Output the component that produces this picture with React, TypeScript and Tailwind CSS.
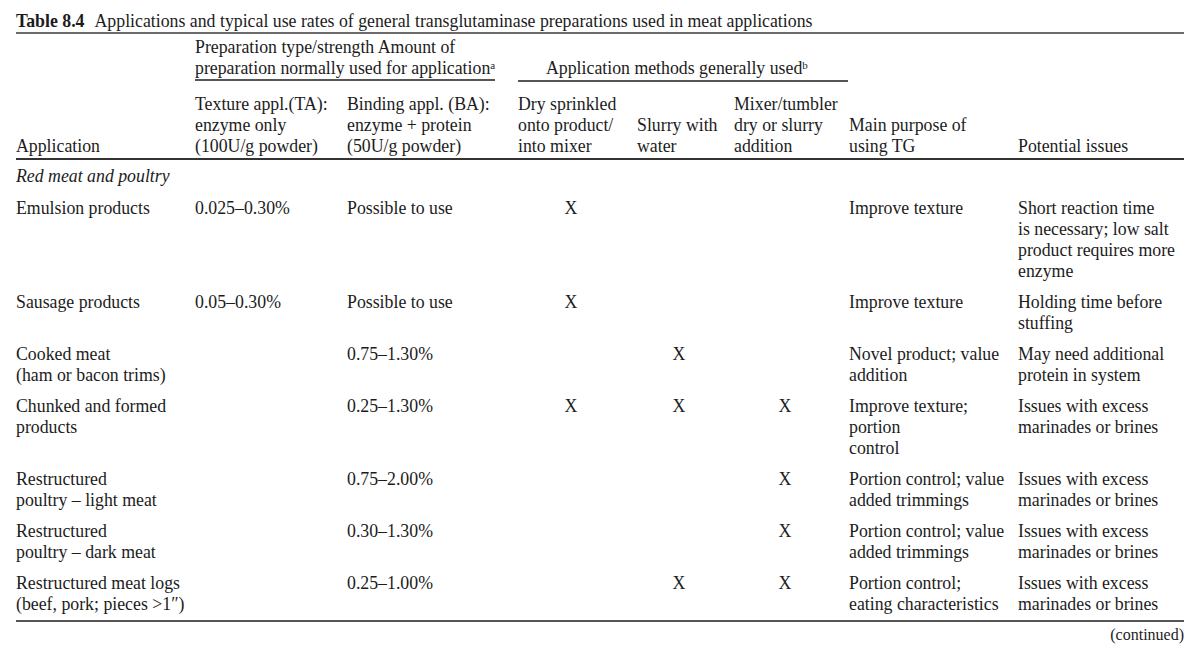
const grid = "grid grid-cols-[179px_152px_171px_119px_97px_115px_169px_166px]";

type Row = {
  app: string[];
  ta?: string;
  ba: string;
  dry?: boolean;
  slurry?: boolean;
  mixer?: boolean;
  purpose: string[];
  issues: string[];
};

const rows: Row[] = [
  {
    app: ["Emulsion products"],
    ta: "0.025–0.30%",
    ba: "Possible to use",
    dry: true,
    purpose: ["Improve texture"],
    issues: ["Short reaction time", "is necessary; low salt", "product requires more", "enzyme"],
  },
  {
    app: ["Sausage products"],
    ta: "0.05–0.30%",
    ba: "Possible to use",
    dry: true,
    purpose: ["Improve texture"],
    issues: ["Holding time before", "stuffing"],
  },
  {
    app: ["Cooked meat", "(ham or bacon trims)"],
    ba: "0.75–1.30%",
    slurry: true,
    purpose: ["Novel product; value", "addition"],
    issues: ["May need additional", "protein in system"],
  },
  {
    app: ["Chunked and formed", "products"],
    ba: "0.25–1.30%",
    dry: true,
    slurry: true,
    mixer: true,
    purpose: ["Improve texture;", "portion", "control"],
    issues: ["Issues with excess", "marinades or brines"],
  },
  {
    app: ["Restructured", "poultry – light meat"],
    ba: "0.75–2.00%",
    mixer: true,
    purpose: ["Portion control; value", "added trimmings"],
    issues: ["Issues with excess", "marinades or brines"],
  },
  {
    app: ["Restructured", "poultry – dark meat"],
    ba: "0.30–1.30%",
    mixer: true,
    purpose: ["Portion control; value", "added trimmings"],
    issues: ["Issues with excess", "marinades or brines"],
  },
  {
    app: ["Restructured meat logs", "(beef, pork; pieces >1″)"],
    ba: "0.25–1.00%",
    slurry: true,
    mixer: true,
    purpose: ["Portion control;", "eating characteristics"],
    issues: ["Issues with excess", "marinades or brines"],
  },
];

function Lines({ lines }: { lines: string[] }) {
  return (
    <div>
      {lines.map((l, i) => (
        <div key={i} className="whitespace-nowrap">
          {l}
        </div>
      ))}
    </div>
  );
}

function Mark({ on }: { on?: boolean }) {
  return <div className="pr-[13px] text-center">{on ? "X" : ""}</div>;
}

export default function App() {
  return (
    <div className="min-h-[653px] w-[1200px] bg-white [font-family:'Liberation_Serif','Times_New_Roman',serif] text-[17.8px] leading-[21px] text-[#1c1c1c]">
      <div className="ml-[16px] w-[1168px] pt-[11px]">
        <div className="whitespace-nowrap border-b-2 border-[#6b6b6b]">
          <span className="font-bold">Table 8.4</span>
          <span className="ml-[10px]">
            Applications and typical use rates of general transglutaminase preparations used in meat applications
          </span>
        </div>

        {/* grouped header */}
        <div className={`${grid} pt-[3px]`}>
          <div />
          <div className="col-span-2">
            <div className="w-fit whitespace-nowrap border-b-2 border-[#555]">
              <div>Preparation type/strength Amount of</div>
              <div>
                preparation normally used for application
                <sup className="text-[11px]">a</sup>
              </div>
            </div>
          </div>
          <div className="col-span-3 pt-[21px]">
            <div className="w-[330px] whitespace-nowrap border-b-2 border-[#555] pb-[1px] pl-[28px]">
              Application methods generally used
              <sup className="text-[11px]">b</sup>
            </div>
          </div>
        </div>

        <div className={`${grid} mt-[12px] items-end border-b-[2.5px] border-[#333] pb-[1px]`}>
          <div>Application</div>
          <Lines lines={["Texture appl.(TA):", "enzyme only", "(100U/g powder)"]} />
          <Lines lines={["Binding appl. (BA):", "enzyme + protein", "(50U/g powder)"]} />
          <Lines lines={["Dry sprinkled", "onto product/", "into mixer"]} />
          <Lines lines={["Slurry with", "water"]} />
          <Lines lines={["Mixer/tumbler", "dry or slurry", "addition"]} />
          <Lines lines={["Main purpose of", "using TG"]} />
          <div>Potential issues</div>
        </div>

        <div className="pt-[6px] italic">Red meat and poultry</div>

        <div className="flex flex-col gap-[10px] pt-[11px]">
          {rows.map((r, i) => (
            <div key={i} className={grid}>
              <Lines lines={r.app} />
              <div className="whitespace-nowrap">{r.ta ?? ""}</div>
              <div className="whitespace-nowrap">{r.ba}</div>
              <Mark on={r.dry} />
              <Mark on={r.slurry} />
              <Mark on={r.mixer} />
              <Lines lines={r.purpose} />
              <Lines lines={r.issues} />
            </div>
          ))}
        </div>

        <div className="mt-[5px] border-t-2 border-[#555]" />
        <div className="pt-[2px] text-right text-[16px]">(continued)</div>
      </div>
    </div>
  );
}
